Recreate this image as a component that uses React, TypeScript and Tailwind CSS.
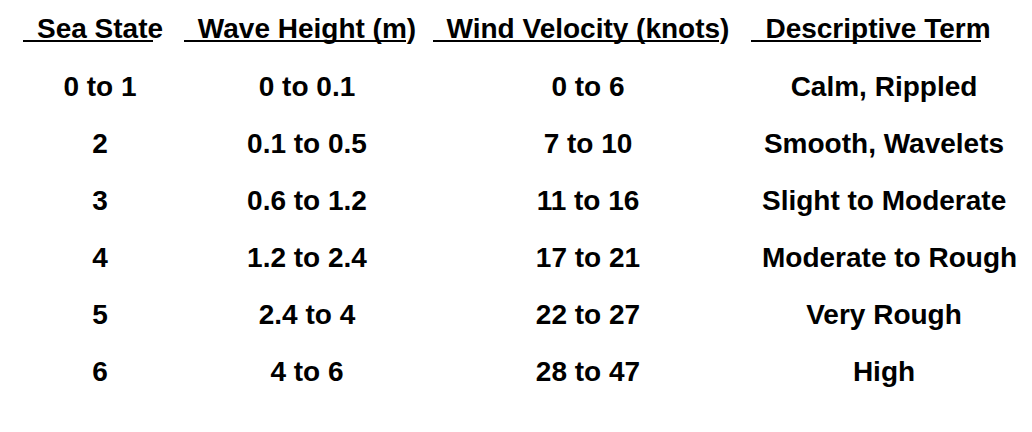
const headers = [
  { label: "Sea State", shift: "" },
  { label: "Wave Height (m)", shift: "" },
  { label: "Wind Velocity (knots)", shift: "" },
  { label: "Descriptive Term", shift: "mr-[12px]" },
];

const rows = [
  ["0 to 1", "0 to 0.1", "0 to 6", "Calm, Rippled"],
  ["2", "0.1 to 0.5", "7 to 10", "Smooth, Wavelets"],
  ["3", "0.6 to 1.2", "11 to 16", "Slight to Moderate"],
  ["4", "1.2 to 2.4", "17 to 21", "Moderate to Rough"],
  ["5", "2.4 to 4", "22 to 27", "Very Rough"],
  ["6", "4 to 6", "28 to 47", "High"],
];

export default function App() {
  return (
    <div
      className="w-[1032px] h-[432px] bg-white text-black font-bold text-[28px] pt-[13px]"
      style={{ fontFamily: '"Liberation Sans", Arial, sans-serif' }}
    >
      <div className="grid grid-cols-[200px_214px_348px_244px]">
        {headers.map((h) => (
          <div key={h.label} className="flex justify-center">
            <div className={`flex flex-col ${h.shift}`}>
              <span className="leading-[32px] whitespace-nowrap">{h.label}</span>
              <div className="h-[2px] bg-black -mt-[5px] -ml-[14px] mr-[10px]" />
            </div>
          </div>
        ))}
      </div>
      <div className="mt-[16px]">
        {rows.map((row) => (
          <div key={row[0]} className="grid grid-cols-[200px_214px_348px_244px] h-[57px]">
            {row.map((cell, i) => (
              <div key={i} className="text-center leading-[57px] whitespace-nowrap">
                {cell}
              </div>
            ))}
          </div>
        ))}
      </div>
    </div>
  );
}
